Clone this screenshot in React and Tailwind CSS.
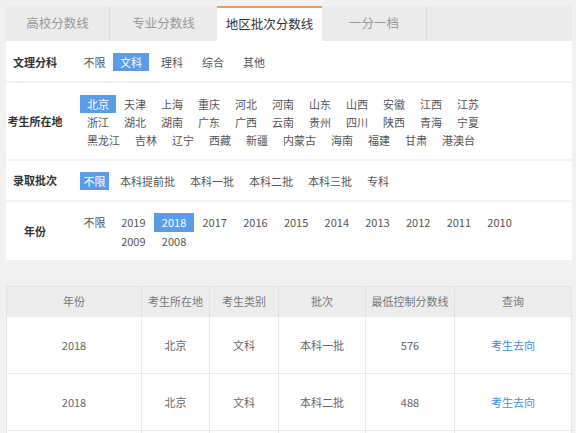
import React from "react";

const provinces = [
  "北京","天津","上海","重庆","河北","河南","山东","山西","安徽","江西","江苏",
  "浙江","湖北","湖南","广东","广西","云南","贵州","四川","陕西","青海","宁夏",
  "黑龙江","吉林","辽宁","西藏","新疆","内蒙古","海南","福建","甘肃","港澳台",
];
const years = ["2019","2018","2017","2016","2015","2014","2013","2012","2011","2010","2009","2008"];
const batches = ["本科提前批","本科一批","本科二批","本科三批","专科"];
const subjects = ["文科","理科","综合","其他"];

const rows = [
  ["2018","北京","文科","本科一批","576"],
  ["2018","北京","文科","本科二批","488"],
];

function Label({ children }) {
  return (
    <div className="w-[58px] shrink-0 flex items-center justify-center text-[11px] font-bold text-[#333]">
      {children}
    </div>
  );
}

const cols = "grid grid-cols-[135px_68px_69px_87px_89px_116px]";

export default function App() {
  return (
    <div className="w-[576px] h-[433px] overflow-hidden bg-[#f1f1f1] pt-[6px] pl-[6px] pr-[4px] font-['Noto_Sans_CJK_SC',sans-serif] text-[11px] text-[#555]">
      {/* Tabs */}
      <div className="flex h-[35px] bg-[#ebebeb]">
        <div className="w-[104px] border-r border-[#dadada] flex items-center justify-center text-[12.5px] text-[#999]">高校分数线</div>
        <div className="w-[107px] flex items-center justify-center text-[12.5px] text-[#999]">专业分数线</div>
        <div className="w-[105px] bg-white border-t-2 border-[#f29b50] flex items-center justify-center text-[12.5px] text-[#333]">地区批次分数线</div>
        <div className="w-[105px] border-r border-[#dadada] flex items-center justify-center text-[12.5px] text-[#999]">一分一档</div>
      </div>

      {/* Filter panel */}
      <div className="bg-white">
        {/* 文理分科 */}
        <div className="flex h-[42px] pt-[2px] border-b-2 border-[#f3f3f3]">
          <Label>文理分科</Label>
          <div className="flex items-center pl-[16px]">
            <span className="px-[3.5px] leading-[18px]">不限</span>
            {subjects.map((s, i) => (
              <span
                key={s}
                className={
                  i === 0
                    ? "ml-[4px] px-[7px] leading-[18px] bg-[#5b9ce8] text-white"
                    : "ml-[5px] px-[7px] leading-[18px]"
                }
              >
                {s}
              </span>
            ))}
          </div>
        </div>

        {/* 考生所在地 */}
        <div className="flex border-b-2 border-[#f3f3f3]">
          <Label>考生所在地</Label>
          <div className="pl-[16px] pt-[12px] pb-[10px]">
            <div className="w-[420px] flex flex-wrap">
              {provinces.map((p, i) => (
                <span
                  key={p}
                  className={
                    i === 0
                      ? "mr-px px-[7px] leading-[18px] bg-[#5b9ce8] text-white"
                      : "mr-px px-[7px] leading-[18px]"
                  }
                >
                  {p}
                </span>
              ))}
            </div>
          </div>
        </div>

        {/* 录取批次 */}
        <div className="flex h-[41px] border-b-2 border-[#f3f3f3]">
          <Label>录取批次</Label>
          <div className="flex items-center pl-[16px]">
            <span className="px-[3.5px] leading-[18px] bg-[#5b9ce8] text-white">不限</span>
            {batches.map((b) => (
              <span key={b} className="ml-[7px] px-[4px] leading-[18px]">
                {b}
              </span>
            ))}
          </div>
        </div>

        {/* 年份 */}
        <div className="flex">
          <Label>年份</Label>
          <div className="flex items-start pl-[16px] pt-[11px] pb-[9px]">
            <span className="px-[3.5px] leading-[19px]">不限</span>
            <div className="ml-[4px] w-[420px] flex flex-wrap">
              {years.map((y) => (
                <span
                  key={y}
                  className={
                    y === "2018"
                      ? "w-[40.7px] text-center leading-[19px] bg-[#5b9ce8] text-white"
                      : "w-[40.7px] text-center leading-[19px]"
                  }
                >
                  {y}
                </span>
              ))}
            </div>
          </div>
        </div>
      </div>

      {/* Table */}
      <div className="mt-[26px] border border-[#e4e4e4] bg-white">
        <div className={`${cols} h-[29px] bg-[#ececec] text-[#777]`}>
          {["年份","考生所在地","考生类别","批次","最低控制分数线","查询"].map((h, i) => (
            <div
              key={h}
              className={
                i < 5
                  ? "flex items-center justify-center border-r border-[#e0e0e0]"
                  : "flex items-center justify-center"
              }
            >
              {h}
            </div>
          ))}
        </div>
        {rows.map((r, ri) => (
          <div key={ri} className={`${cols} h-[57px] border-t border-[#e8e8e8] text-[#666]`}>
            {r.map((c, i) => (
              <div key={i} className="flex items-center justify-center border-r border-[#e8e8e8]">
                {c}
              </div>
            ))}
            <div className="flex items-center justify-center text-[#3b8ced]">考生去向</div>
          </div>
        ))}
        <div className={`${cols} h-[57px] border-t border-[#e8e8e8]`}>
          <div className="border-r border-[#e8e8e8]" />
          <div className="border-r border-[#e8e8e8]" />
          <div className="border-r border-[#e8e8e8]" />
          <div className="border-r border-[#e8e8e8]" />
          <div className="border-r border-[#e8e8e8]" />
          <div />
        </div>
      </div>
    </div>
  );
}
